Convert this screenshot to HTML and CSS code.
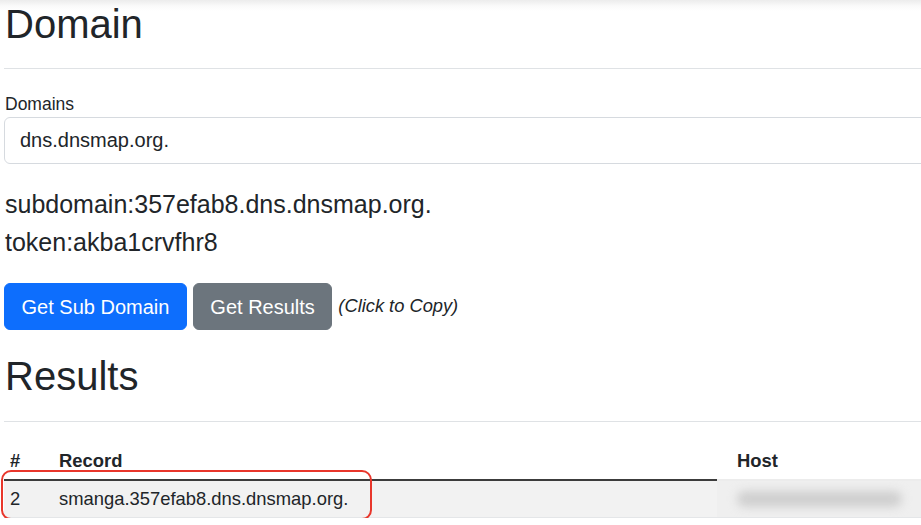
FILE: index.html
```html
<!DOCTYPE html>
<html>
<head>
  <title>Domain</title>
  <meta name="viewport" content="width=device-width, initial-scale=1.0">
  <link rel="stylesheet" href="styles.css">
</head>
<body>
  <div class="container">
    <h1>Domain</h1>
    <hr class="domain-rule">

    <label class="form-label" for="domains">Domains</label>
    <input class="form-control" id="domains" type="text" value="dns.dnsmap.org.">

    <div class="info">
      <div>subdomain:357efab8.dns.dnsmap.org.</div>
      <div>token:akba1crvfhr8</div>
    </div>

    <div class="actions">
      <button class="btn btn-primary">Get Sub Domain</button>
      <button class="btn btn-secondary">Get Results</button>
      <em class="hint">(Click to Copy)</em>
    </div>

    <h1 class="results-title">Results</h1>
    <hr class="results-rule">

    <div class="table-wrap">
      <table class="table">
        <thead>
          <tr>
            <th class="col-num">#</th>
            <th class="col-record">Record</th>
            <th class="col-host">Host</th>
          </tr>
        </thead>
        <tbody>
          <tr>
            <td class="col-num">2</td>
            <td class="col-record">smanga.357efab8.dns.dnsmap.org.</td>
            <td class="col-host"><div class="redacted"></div></td>
          </tr>
        </tbody>
      </table>
      <div class="highlight"></div>
    </div>
  </div>
</body>
</html>
```

FILE: styles.css
```css
html, body {
  margin: 0;
  overflow: hidden;
}

body {
  font-family: "Liberation Sans", Arial, sans-serif;
  color: #212529;
  background: linear-gradient(180deg, #ececec 0px, #fafafa 6px, #ffffff 11px) no-repeat;
  background-color: #fff;
}

.container {
  width: 960px;
  padding-left: 4px;
}

h1 {
  font-size: 40px;
  font-weight: 400;
  line-height: 48px;
  margin: 0 0 20px 1px;
}

hr {
  border: 0;
  border-top: 1px solid #dfe2e5;
  margin: 0 0 21px 0;
}

.domain-rule {
  margin-bottom: 23px;
}

.form-label {
  display: block;
  font-size: 17.5px;
  line-height: 24px;
  margin: 0 0 1px 1px;
}

.form-control {
  display: block;
  box-sizing: border-box;
  width: 100%;
  height: 47px;
  padding: 0 15px;
  font-family: inherit;
  font-size: 20px;
  color: #212529;
  border: 1px solid #d6dadf;
  border-radius: 6px;
  background: #fff;
  outline: none;
}

.info {
  margin-top: 21px;
  margin-left: 1px;
  font-size: 25px;
  line-height: 38px;
}

.actions {
  display: flex;
  align-items: center;
  gap: 6px;
  margin-top: 22px;
}

.btn {
  font-family: inherit;
  font-size: 20px;
  line-height: 30px;
  padding: 7.5px 16.5px;
  border-radius: 6px;
  border: 1px solid transparent;
  color: #fff;
}

.btn-primary {
  background-color: #0d6efd;
  border-color: #0d6efd;
}

.btn-secondary {
  background-color: #6c757d;
  border-color: #6c757d;
}

.hint {
  font-size: 18.3px;
  margin-top: -2px;
}

.results-title {
  margin-top: 22px;
  margin-bottom: 21px;
}

.results-rule {
  margin-bottom: 21px;
}

.table-wrap {
  position: relative;
}

.table {
  width: 100%;
  border-collapse: collapse;
  font-size: 18.4px;
}

.table th,
.table td {
  text-align: left;
  padding: 6px 6px;
  line-height: 24px;
}

.table th {
  font-weight: 700;
  border-bottom: 2px solid #3c3c3c;
}

.table td {
  border-bottom: 1px solid #e4e6e8;
  background: #f2f2f2;
}

.col-num {
  width: 37px;
}

.col-record {
  width: 652px;
}

.table th.col-host {
  padding-left: 20px;
  border-bottom-color: #ececec;
}

.table td.col-host {
  background: #efefef;
  padding-left: 20px;
}

.redacted {
  width: 165px;
  height: 16px;
  background: #cfcfcf;
  border-radius: 8px;
  filter: blur(5px);
}

/* red annotation box drawn over the first row */
.highlight {
  position: absolute;
  left: -3px;
  top: 27px;
  width: 367px;
  height: 46px;
  border: 2.5px solid #e8362b;
  border-radius: 10px;
}
```
